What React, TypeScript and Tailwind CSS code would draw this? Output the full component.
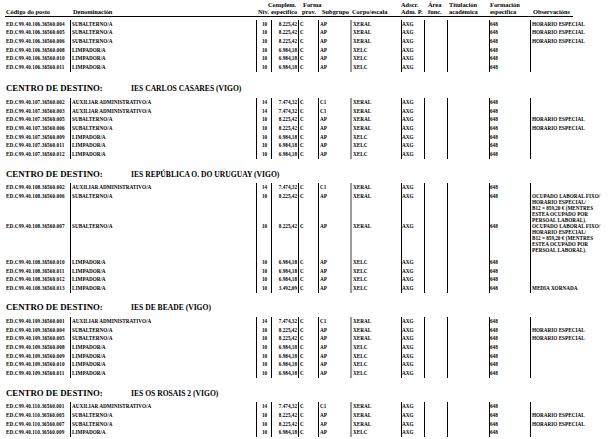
import React from 'react';

type Row = {
    code: string;
    den: string;
    niv: string;
    comp: string;
    sub: string;
    corpo: string;
    obs?: string[];
    h?: 'a' | 'b';
};

type Section = { centro?: string; rows: Row[] };

const AUX = { den: 'AUXILIAR ADMINISTRATIVO/A', niv: '14', comp: '7.474,32', sub: 'C1', corpo: 'XERAL' };
const SUB = { den: 'SUBALTERNO/A', niv: '10', comp: '8.225,42', sub: 'AP', corpo: 'XERAL' };
const LIM = { den: 'LIMPADOR/A', niv: '10', comp: '6.984,18', sub: 'AP', corpo: 'XELC' };
const HE = ['HORARIO ESPECIAL'];
const FIXO = ['OCUPADO LABORAL FIXO/', 'HORARIO ESPECIAL/', 'B12 = 859,20 € (MENTRES', 'ESTEA OCUPADO POR', 'PERSOAL LABORAL).'];

const sections: Section[] = [
    {
        rows: [
            { code: 'ED.C99.40.106.36560.004', ...SUB, obs: HE },
            { code: 'ED.C99.40.106.36560.005', ...SUB, obs: HE },
            { code: 'ED.C99.40.106.36560.006', ...SUB, obs: HE },
            { code: 'ED.C99.40.106.36560.008', ...LIM },
            { code: 'ED.C99.40.106.36560.010', ...LIM },
            { code: 'ED.C99.40.106.36560.011', ...LIM },
        ],
    },
    {
        centro: 'IES CARLOS CASARES (VIGO)',
        rows: [
            { code: 'ED.C99.40.107.36560.002', ...AUX },
            { code: 'ED.C99.40.107.36560.003', ...AUX },
            { code: 'ED.C99.40.107.36560.005', ...SUB, obs: HE },
            { code: 'ED.C99.40.107.36560.006', ...SUB, obs: HE },
            { code: 'ED.C99.40.107.36560.009', ...LIM },
            { code: 'ED.C99.40.107.36560.011', ...LIM },
            { code: 'ED.C99.40.107.36560.012', ...LIM },
        ],
    },
    {
        centro: 'IES REPÚBLICA O. DO URUGUAY (VIGO)',
        rows: [
            { code: 'ED.C99.40.108.36560.002', ...AUX },
            { code: 'ED.C99.40.108.36560.006', ...SUB, obs: FIXO, h: 'a' },
            { code: 'ED.C99.40.108.36560.007', ...SUB, obs: FIXO, h: 'b' },
            { code: 'ED.C99.40.108.36560.010', ...LIM },
            { code: 'ED.C99.40.108.36560.011', ...LIM },
            { code: 'ED.C99.40.108.36560.012', ...LIM },
            { code: 'ED.C99.40.108.36560.013', ...LIM, comp: '3.492,09', obs: ['MEDIA XORNADA'] },
        ],
    },
    {
        centro: 'IES DE BEADE (VIGO)',
        rows: [
            { code: 'ED.C99.40.109.36560.001', ...AUX },
            { code: 'ED.C99.40.109.36560.004', ...SUB, obs: HE },
            { code: 'ED.C99.40.109.36560.005', ...SUB, obs: HE },
            { code: 'ED.C99.40.109.36560.008', ...LIM },
            { code: 'ED.C99.40.109.36560.009', ...LIM },
            { code: 'ED.C99.40.109.36560.010', ...LIM },
            { code: 'ED.C99.40.109.36560.011', ...LIM },
        ],
    },
    {
        centro: 'IES OS ROSAIS 2 (VIGO)',
        rows: [
            { code: 'ED.C99.40.110.36560.001', ...AUX },
            { code: 'ED.C99.40.110.36560.005', ...SUB, obs: HE },
            { code: 'ED.C99.40.110.36560.007', ...SUB, obs: HE },
            { code: 'ED.C99.40.110.36560.009', ...LIM },
        ],
    },
];

const COLS = 'grid grid-cols-[70px_186px_15px_27px_20px_32px_51px_23px_23px_42px_41px_86px]';

function TableRow({ r }: { r: Row }) {
    const cell = 'border-l border-black whitespace-nowrap';
    const height = r.h === 'a' ? 'h-[30px]' : r.h === 'b' ? 'h-[36px]' : 'h-[8.67px]';
    return (
        <div className={`${COLS} ${height} text-[5.2px] leading-[8.67px]`}>
            <div className="pl-[6px] tracking-[0.1px] whitespace-nowrap">{r.code}</div>
            <div className={`${cell} pl-[1px]`}>{r.den}</div>
            <div className={`${cell} pl-[5px]`}>{r.niv}</div>
            <div className={`${cell} text-right pr-[1px]`}>{r.comp}</div>
            <div className={`${cell} pl-[1px]`}>C</div>
            <div className={`${cell} pl-[1px]`}>{r.sub}</div>
            <div className="border-l-2 border-[#9a9a9a] pl-[1px] whitespace-nowrap">{r.corpo}</div>
            <div className={cell}>AXG</div>
            <div className={cell}></div>
            <div className={cell}></div>
            <div className={cell}>648</div>
            <div className={`${cell} pl-[1px]`}>
                {r.obs && r.obs.length > 1 ? (
                    <div className="pt-[1.3px] leading-[6px]">
                        {r.obs.map((l) => (
                            <div key={l}>{l}</div>
                        ))}
                    </div>
                ) : (
                    r.obs?.[0]
                )}
            </div>
        </div>
    );
}

export default function App() {
    return (
        <div className="w-[616px] h-[439px] overflow-hidden bg-white text-black font-bold font-['Liberation_Serif',serif]">
            {/* Column headers */}
            <div className="h-[17px] pt-[1px]">
                <div className={`${COLS} text-[6.4px] leading-[7px] whitespace-nowrap`}>
                    <div></div>
                    <div></div>
                    <div></div>
                    <div className="-ml-[3px]">Complem.</div>
                    <div className="pl-[5px]">Forma</div>
                    <div></div>
                    <div></div>
                    <div>Adscr.</div>
                    <div className="pl-[4px]">Área</div>
                    <div className="pl-[2px]">Titulación</div>
                    <div className="pl-[1px]">Formación</div>
                    <div></div>
                </div>
                <div className={`${COLS} text-[6.4px] leading-[8px] whitespace-nowrap`}>
                    <div className="pl-[6px]">Código do posto</div>
                    <div className="pl-[3px]">Denominación</div>
                    <div className="pl-[2px]">Nív.</div>
                    <div>específico</div>
                    <div className="pl-[4px]">prov.</div>
                    <div className="pl-[4px]">Subgrupo</div>
                    <div className="pl-[2px]">Corpo/escala</div>
                    <div>Adm. P.</div>
                    <div className="pl-[4px]">func.</div>
                    <div className="pl-[2px]">académica</div>
                    <div className="pl-[1px]">específica</div>
                    <div className="pl-[3px]">Observacións</div>
                </div>
                <div className="ml-[5px] w-[568px] border-t border-black"></div>
            </div>

            {sections.map((s, i) => (
                <div key={i} className={i === 0 ? 'mt-[2.7px]' : i === 1 ? 'mt-[9.8px]' : 'mt-[7.9px]'}>
                    {s.centro && (
                        <div className="h-[16.7px] flex items-baseline pl-[6px] leading-[14px] whitespace-nowrap">
                            <span className="w-[125px] text-[8.8px]">CENTRO DE DESTINO:</span>
                            <span className="text-[7.6px]">{s.centro}</span>
                        </div>
                    )}
                    {s.rows.map((r) => (
                        <TableRow key={r.code} r={r} />
                    ))}
                </div>
            ))}
        </div>
    );
}
